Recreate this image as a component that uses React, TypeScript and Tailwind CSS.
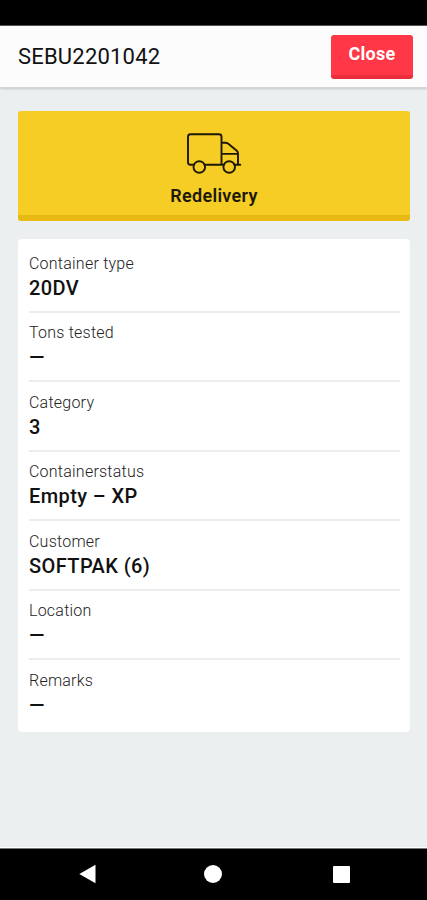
const fields = [
  { label: "Container type", value: "20DV" },
  { label: "Tons tested", value: "—" },
  { label: "Category", value: "3" },
  { label: "Containerstatus", value: "Empty – XP" },
  { label: "Customer", value: "SOFTPAK (6)" },
  { label: "Location", value: "—" },
  { label: "Remarks", value: "—" },
];

function TruckIcon() {
  return (
    <svg width="56" height="42" viewBox="0 0 56 42" fill="none" stroke="#1c1908" strokeWidth="1.9" strokeLinejoin="round" strokeLinecap="round">
      <path d="M8 32.8H4.5Q2 32.8 2 30.3V4.8Q2 2.3 4.5 2.3H33Q35.5 2.3 35.5 4.8V32.8M18.4 32.8H38.2M35.5 10.7H39.5Q41 10.7 42 11.6L50.8 18.8Q52 19.8 52 21.3V32.8M35.5 21.9H52M48.3 32.8H54.3" />
      <circle cx="13.3" cy="35" r="5.8" />
      <circle cx="43.2" cy="35" r="5.8" />
    </svg>
  );
}

export default function App() {
  return (
    <div className="flex h-[900px] w-full flex-col overflow-hidden bg-[#ebeff0] font-['Roboto',sans-serif] text-[#111]">
      <div className="h-[26px] shrink-0 border-b border-[#555] bg-black" />
      <header className="flex h-[62px] shrink-0 items-start justify-between border-b border-[#d3d6d7] bg-[#fcfcfc] pl-[18px] pr-[14px] pt-[9px] shadow-[0_1px_2px_rgba(0,0,0,0.16)]">
        <h1 className="pt-[9px] text-[22px] leading-[26px] tracking-[0.2px]">SEBU2201042</h1>
        <button className="flex h-[44px] w-[82px] justify-center rounded-[3px] border-b-4 border-[#ea2e3b] bg-[#ff3746] pt-[7px] text-[18px] font-bold leading-[24px] tracking-[0.3px] text-white">Close</button>
      </header>
      <main className="flex min-h-0 flex-1 flex-col gap-[18px] pl-[18px] pr-[17px] pt-[23px]">
        <section className="flex h-[110px] shrink-0 flex-col items-center rounded-[3px] border-b-[6px] border-[#e8b913] bg-[#f5cd25] pt-[21px]">
          <TruckIcon />
          <span className="mt-[11px] text-[18px] font-semibold leading-[22px] tracking-[0.3px] text-[#1c1908]">Redelivery</span>
        </section>
        <section className="h-[493px] shrink-0 rounded-[4px] bg-white pl-[11px] pr-[10px] pt-[4px]">
          {fields.map((field) => (
            <div key={field.label} className="h-[69.5px] border-b-2 border-[#ededed] pt-[9.5px] last:border-b-0">
              <div className="text-[16px] font-light leading-[22px] tracking-[0.23px] text-[#222]">{field.label}</div>
              <div className="text-[20px] font-medium leading-[26px] tracking-[0.4px]">{field.value}</div>
            </div>
          ))}
        </section>
      </main>
      <div className="h-px shrink-0 bg-white" />
      <nav className="flex h-[52px] shrink-0 items-center justify-between border-t border-[#777] bg-black pb-px pl-[79px] pr-[77.5px]">
        <svg width="17" height="20" viewBox="0 0 17 20"><path d="M0.3 10L16.5 0.8V19.2Z" fill="white" /></svg>
        <div className="-ml-[2px] size-[18px] rounded-full bg-white" />
        <div className="size-[17px] rounded-[1px] bg-white" />
      </nav>
    </div>
  );
}
